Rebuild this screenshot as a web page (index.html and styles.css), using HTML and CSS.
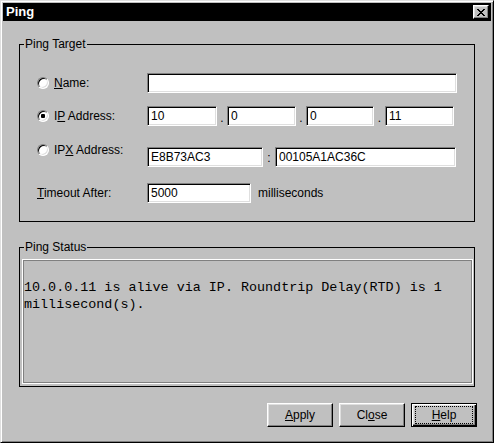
FILE: index.html
```html
<!DOCTYPE html>
<html>
<head>
<meta charset="utf-8">
<title>Ping</title>
<link rel="stylesheet" href="styles.css">
</head>
<body>
<div class="window">
  <div class="titlebar">
    <span class="title">Ping</span>
    <span class="closebtn"><svg width="8" height="7" viewBox="0 0 8 7"><path d="M0 0h2v1h1v1h2V1h1V0h2v1H7v1H6v1H5v1h1v1h1v1h1v1H6V6H5V5H3v1H2v1H0V6h1V5h1V4h1V3H2V2H1V1H0z" fill="#000"/></svg></span>
  </div>
  <div class="content">
    <div class="group target">
      <span class="legend">Ping Target</span>
      <div class="row r1">
        <div class="lab"><span class="radio"></span><span><u>N</u>ame:</span></div>
        <span class="field w-name"></span>
      </div>
      <div class="row r2">
        <div class="lab"><span class="radio on"><i></i></span><span>I<u>P</u> Address:</span></div>
        <span class="field w-ip1">10</span><span class="sep s10">.</span>
        <span class="field w-ip2">0</span><span class="sep s10">.</span>
        <span class="field w-ip3">0</span><span class="sep s11">.</span>
        <span class="field w-ip4">11</span>
      </div>
      <div class="row r3">
        <div class="lab up"><span class="radio"></span><span>IP<u>X</u> Address:</span></div>
        <span class="field w-ipx1">E8B73AC3</span><span class="sep colon">:</span>
        <span class="field w-ipx2">00105A1AC36C</span>
      </div>
      <div class="row r4">
        <div class="lab"><span><u>T</u>imeout After:</span></div>
        <span class="field w-time">5000</span><span class="unit">milliseconds</span>
      </div>
    </div>
    <div class="group status">
      <span class="legend">Ping Status</span>
      <div class="output">10.0.0.11 is alive via IP. Roundtrip Delay(RTD) is 1<br>millisecond(s).</div>
    </div>
    <div class="buttons">
      <span class="btn"><span class="cap"><u>A</u>pply</span></span>
      <span class="btn"><span class="cap">Cl<u>o</u>se</span></span>
      <span class="btn default"><span class="cap"><u>H</u>elp</span></span>
    </div>
  </div>
</div>
</body>
</html>
```
FILE: styles.css
```css
* { box-sizing: border-box; }
html, body { margin: 0; padding: 0; background: #c0c0c0; }
body { font-family: "Liberation Sans", Arial, sans-serif; font-size: 12px; color: #000; }

.window {
  width: 494px; height: 443px;
  background: #c0c0c0;
  border: 1px solid;
  border-color: #dfdfdf #000 #000 #dfdfdf;
  box-shadow: inset 1px 1px #fff, inset -1px -1px #808080;
  padding: 2px;
  display: flex; flex-direction: column;
}

.titlebar {
  height: 18px; background: #000; color: #fff;
  display: flex; align-items: center; justify-content: space-between;
  padding: 0 2px 0 3px;
}
.title { font-weight: bold; font-size: 13px; line-height: 18px; }
.closebtn {
  width: 16px; height: 14px; background: #c0c0c0;
  border: 1px solid; border-color: #fff #000 #000 #fff;
  box-shadow: inset -1px -1px #808080, inset 1px 1px #dfdfdf;
  display: flex; align-items: center; justify-content: center;
  padding-top: 1px;
}
.closebtn svg { display: block; }

.content { display: flex; flex-direction: column; }

.group { position: relative; border: 1px solid #000; margin-left: 16px; width: 456px; }
.legend {
  position: absolute; top: -8px; left: 4px;
  background: #c0c0c0; padding: 0 1px; line-height: 14px;
}
.target { margin-top: 23px; height: 178px; padding: 28px 0 0 17px; }
.status { margin-top: 25px; height: 140px; padding: 11px 1px 2px 2px; }

.row { display: flex; align-items: center; height: 20px; }
.r2 { margin-top: 13px; }
.r3 { margin-top: 21px; align-items: flex-start; }
.r4 { margin-top: 16px; }

.lab { width: 110px; display: flex; align-items: center; gap: 5px; line-height: 14px; }
.lab.up { margin-top: -4px; }

.radio {
  width: 12px; height: 12px; border-radius: 50%; background: #fff;
  border: 1px solid; border-color: #808080 #fff #fff #808080;
  box-shadow: inset 1px 1px #000, inset -1px -1px #dfdfdf;
  display: flex; align-items: center; justify-content: center;
  flex: none;
}
.radio i { width: 4px; height: 4px; background: #000; border-radius: 1px; display: block; }

.field {
  height: 20px; background: #fff;
  border: 1px solid; border-color: #808080 #fff #fff #808080;
  box-shadow: inset 1px 1px #000, inset -1px -1px #dfdfdf;
  padding-left: 3px; line-height: 18px; white-space: nowrap; flex: none;
}
.w-name { width: 310px; }
.w-ip1 { width: 70px; }
.w-ip2 { width: 69px; }
.w-ip3 { width: 68px; }
.w-ip4 { width: 69px; }
.w-ipx1 { width: 116px; }
.w-ipx2 { width: 181px; }
.w-time { width: 104px; }

.sep { text-align: center; line-height: 20px; flex: none; padding-top: 3px; }
.s10 { width: 10px; }
.s11 { width: 11px; }
.colon { width: 12px; padding-top: 1px; }
.unit { margin-left: 7px; line-height: 20px; }

.output {
  height: 100%;
  border: 1px solid #fff;
  box-shadow: inset 0 0 0 1px #808080;
  padding: 19px 0 0 1px;
  font-family: "Liberation Mono", "Courier New", monospace;
  font-size: 13.4px; line-height: 17px; white-space: nowrap;
}

.buttons {
  margin-top: 16px; display: flex; justify-content: flex-end; gap: 6px;
  padding-right: 14px;
}
.btn {
  width: 66px; height: 24px; background: #c0c0c0;
  border: 1px solid; border-color: #fff #000 #000 #fff;
  box-shadow: inset -1px -1px #808080, inset 1px 1px #dfdfdf;
  display: flex; align-items: center; justify-content: center;
  line-height: 14px;
}
.btn.default {
  border: 1px solid #000;
  box-shadow: inset 1px 1px #fff, inset -1px -1px #000, inset -2px -2px #808080, inset 2px 2px #dfdfdf;
}
.btn.default .cap {
  outline: 1px dotted #000; outline-offset: 0;
  width: 56px; height: 16px; display: flex; align-items: center; justify-content: center;
}
```
